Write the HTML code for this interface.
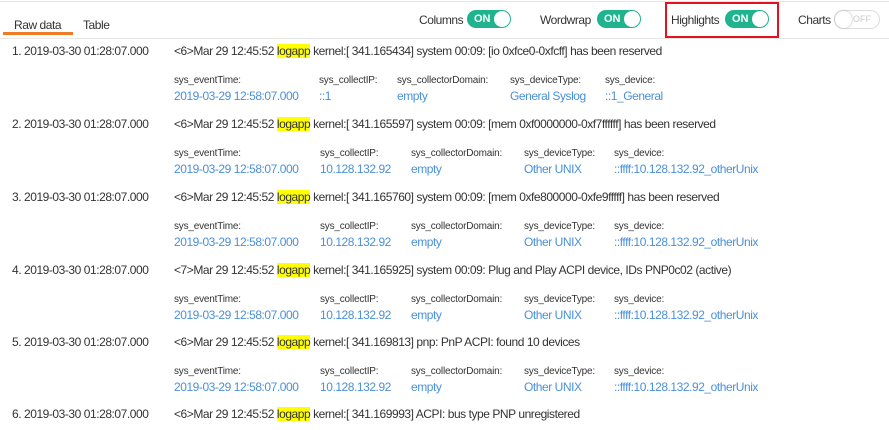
<!DOCTYPE html>
<html><head><style>
body{margin:0;width:889px;height:430px;overflow:hidden;background:#fff;font-family:"Liberation Sans",sans-serif;color:#333;position:relative}
.a{position:absolute;white-space:nowrap}
.t{font-size:12px;letter-spacing:-0.45px}
.l{font-size:10px;color:#333;letter-spacing:-0.2px}
.v{font-size:12px;color:#4a90d9;letter-spacing:-0.45px}
.hl{background:#ffff00}
.tg{position:absolute;width:44px;height:18px;border-radius:10px;top:10px}
.on{background:#1fb38e}
.on span{position:absolute;left:7px;top:3px;color:#fff;font-size:11px;font-weight:bold}
.on i{position:absolute;right:1px;top:1px;width:16px;height:16px;border-radius:50%;background:#fff}
.off{background:#fff;border:1px solid #ddd;width:44px;height:17px}
.off span{position:absolute;right:8px;top:3px;color:#ccc;font-size:9px}
.off i{position:absolute;left:0;top:0;width:17px;height:17px;border-radius:50%;background:#fff;box-shadow:0 0 2px #aaa}
</style></head><body>
<div class="a" style="left:0;top:1px;width:889px;height:1px;background:#e5e5e5"></div>
<div class="a t" style="left:14px;top:18px">Raw data</div>
<div class="a t" style="left:83px;top:18px">Table</div>
<div class="a" style="left:3px;top:32px;width:70px;height:3px;background:#f07b26"></div>
<div class="a" style="left:0;top:38px;width:889px;height:1px;background:#e5e5e5"></div>
<div class="a t" style="left:419px;top:13px">Columns</div>
<div class="tg on" style="left:467px"><span>ON</span><i></i></div>
<div class="a t" style="left:540px;top:13px">Wordwrap</div>
<div class="tg on" style="left:597px"><span>ON</span><i></i></div>
<div class="a" style="left:665px;top:2px;width:110px;height:32px;border:2px solid #e3121e"></div>
<div class="a t" style="left:671px;top:13px">Highlights</div>
<div class="tg on" style="left:725px"><span>ON</span><i></i></div>
<div class="a t" style="left:798px;top:13px">Charts</div>
<div class="tg off" style="left:834px"><span>OFF</span><i></i></div>

<div class="a t" style="left:12px;top:44px">1. 2019-03-30 01:28:07.000</div>
<div class="a t" style="left:174px;top:44px">&lt;6&gt;Mar 29 12:45:52 <span class="hl">logapp</span> kernel:[ 341.165434] system 00:09: [io 0xfce0-0xfcff] has been reserved</div>
<div class="a l" style="left:174px;top:75px">sys_eventTime:</div><div class="a v" style="left:174px;top:89px">2019-03-29 12:58:07.000</div>
<div class="a l" style="left:319px;top:75px">sys_collectIP:</div><div class="a v" style="left:319px;top:89px">::1</div>
<div class="a l" style="left:397px;top:75px">sys_collectorDomain:</div><div class="a v" style="left:397px;top:89px">empty</div>
<div class="a l" style="left:510px;top:75px">sys_deviceType:</div><div class="a v" style="left:510px;top:89px">General Syslog</div>
<div class="a l" style="left:605px;top:75px">sys_device:</div><div class="a v" style="left:605px;top:89px">::1_General</div>

<div class="a t" style="left:12px;top:117px">2. 2019-03-30 01:28:07.000</div>
<div class="a t" style="left:174px;top:117px">&lt;6&gt;Mar 29 12:45:52 <span class="hl">logapp</span> kernel:[ 341.165597] system 00:09: [mem 0xf0000000-0xf7ffffff] has been reserved</div>
<div class="a l" style="left:174px;top:148px">sys_eventTime:</div><div class="a v" style="left:174px;top:162px">2019-03-29 12:58:07.000</div>
<div class="a l" style="left:320px;top:148px">sys_collectIP:</div><div class="a v" style="left:320px;top:162px">10.128.132.92</div>
<div class="a l" style="left:411px;top:148px">sys_collectorDomain:</div><div class="a v" style="left:411px;top:162px">empty</div>
<div class="a l" style="left:524px;top:148px">sys_deviceType:</div><div class="a v" style="left:524px;top:162px">Other UNIX</div>
<div class="a l" style="left:614px;top:148px">sys_device:</div><div class="a v" style="left:614px;top:162px">::ffff:10.128.132.92_otherUnix</div>

<div class="a t" style="left:12px;top:190px">3. 2019-03-30 01:28:07.000</div>
<div class="a t" style="left:174px;top:190px">&lt;6&gt;Mar 29 12:45:52 <span class="hl">logapp</span> kernel:[ 341.165760] system 00:09: [mem 0xfe800000-0xfe9fffff] has been reserved</div>
<div class="a l" style="left:174px;top:221px">sys_eventTime:</div><div class="a v" style="left:174px;top:235px">2019-03-29 12:58:07.000</div>
<div class="a l" style="left:320px;top:221px">sys_collectIP:</div><div class="a v" style="left:320px;top:235px">10.128.132.92</div>
<div class="a l" style="left:411px;top:221px">sys_collectorDomain:</div><div class="a v" style="left:411px;top:235px">empty</div>
<div class="a l" style="left:524px;top:221px">sys_deviceType:</div><div class="a v" style="left:524px;top:235px">Other UNIX</div>
<div class="a l" style="left:614px;top:221px">sys_device:</div><div class="a v" style="left:614px;top:235px">::ffff:10.128.132.92_otherUnix</div>

<div class="a t" style="left:12px;top:263px">4. 2019-03-30 01:28:07.000</div>
<div class="a t" style="left:174px;top:263px">&lt;7&gt;Mar 29 12:45:52 <span class="hl">logapp</span> kernel:[ 341.165925] system 00:09: Plug and Play ACPI device, IDs PNP0c02 (active)</div>
<div class="a l" style="left:174px;top:294px">sys_eventTime:</div><div class="a v" style="left:174px;top:308px">2019-03-29 12:58:07.000</div>
<div class="a l" style="left:320px;top:294px">sys_collectIP:</div><div class="a v" style="left:320px;top:308px">10.128.132.92</div>
<div class="a l" style="left:411px;top:294px">sys_collectorDomain:</div><div class="a v" style="left:411px;top:308px">empty</div>
<div class="a l" style="left:524px;top:294px">sys_deviceType:</div><div class="a v" style="left:524px;top:308px">Other UNIX</div>
<div class="a l" style="left:614px;top:294px">sys_device:</div><div class="a v" style="left:614px;top:308px">::ffff:10.128.132.92_otherUnix</div>

<div class="a t" style="left:12px;top:335px">5. 2019-03-30 01:28:07.000</div>
<div class="a t" style="left:174px;top:335px">&lt;6&gt;Mar 29 12:45:52 <span class="hl">logapp</span> kernel:[ 341.169813] pnp: PnP ACPI: found 10 devices</div>
<div class="a l" style="left:174px;top:366px">sys_eventTime:</div><div class="a v" style="left:174px;top:380px">2019-03-29 12:58:07.000</div>
<div class="a l" style="left:320px;top:366px">sys_collectIP:</div><div class="a v" style="left:320px;top:380px">10.128.132.92</div>
<div class="a l" style="left:411px;top:366px">sys_collectorDomain:</div><div class="a v" style="left:411px;top:380px">empty</div>
<div class="a l" style="left:524px;top:366px">sys_deviceType:</div><div class="a v" style="left:524px;top:380px">Other UNIX</div>
<div class="a l" style="left:614px;top:366px">sys_device:</div><div class="a v" style="left:614px;top:380px">::ffff:10.128.132.92_otherUnix</div>

<div class="a t" style="left:12px;top:407px">6. 2019-03-30 01:28:07.000</div>
<div class="a t" style="left:174px;top:407px">&lt;6&gt;Mar 29 12:45:52 <span class="hl">logapp</span> kernel:[ 341.169993] ACPI: bus type PNP unregistered</div>
</body></html>
